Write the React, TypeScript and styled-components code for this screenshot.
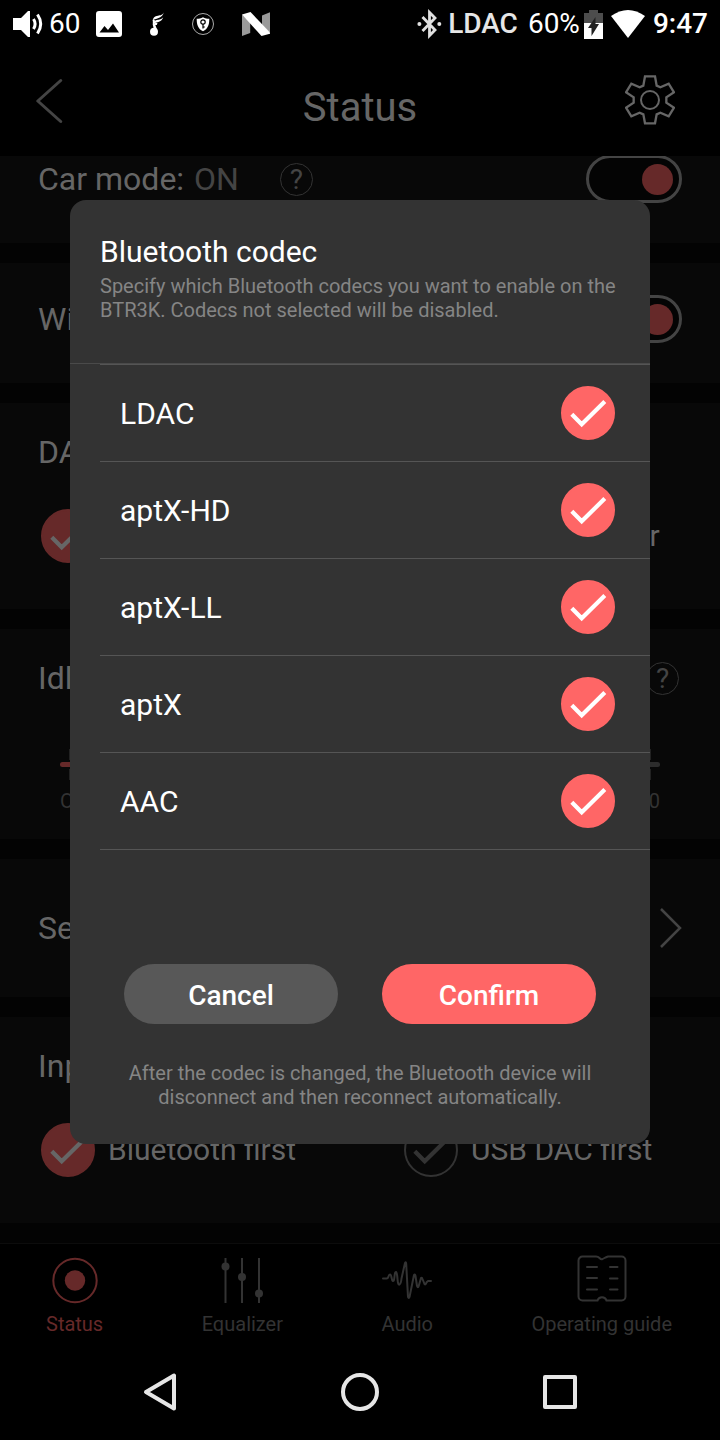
import React from "react";
import styled, { createGlobalStyle, css } from "styled-components";

const color = {
  accent: "#ff6666",
  accentDim: "#662929",
  panel: "#080808",
  gap: "#030303",
  text: "#666666",
  muted: "#444444",
  faint: "#333333",
  dialog: "#333333",
  line: "#555555",
  note: "#858585",
};

const GlobalStyle = createGlobalStyle`
  *, *::before, *::after { box-sizing: border-box; }
  body { margin: 0; background: #000; font-family: Roboto, "Liberation Sans", sans-serif; }
  h1, h2, h3, p, ul { margin: 0; padding: 0; font-weight: 400; }
  ul { list-style: none; }
  button { padding: 0; border: 0; background: none; color: inherit; font: inherit; cursor: pointer; }
  svg { display: block; flex: none; }
`;

const Screen = styled.div`
  position: relative;
  display: flex;
  flex-direction: column;
  height: 100vh;
  overflow: hidden;
  background: #000;
`;

/* ---------- system status bar ---------- */

const StatusBar = styled.div`
  position: relative;
  z-index: 2;
  display: flex;
  flex: none;
  justify-content: space-between;
  height: 50px;
  padding: 0 12px 2px 13px;
  color: #fff;
  font-size: 28px;
  line-height: 50px;
`;

const StatusGroup = styled.div<{ $gap: number }>`
  display: flex;
  align-items: center;
  gap: ${(p) => p.$gap}px;
`;

const StatusIcons = styled.div`
  display: flex;
  align-items: center;
  gap: 28px;
  margin-left: 10px;
`;

const StatusText = styled.span<{ $medium?: boolean }>`
  font-weight: ${(p) => (p.$medium ? 500 : 400)};
`;

const CodecText = styled.span`
  margin-right: 2px;
  color: #e6e6e6;
  font-weight: 500;
`;

/* ---------- app header ---------- */

const Header = styled.header`
  display: grid;
  flex: none;
  grid-template-columns: 1fr auto 1fr;
  align-items: start;
  height: 106px;
  padding: 0 36px;
  color: ${color.text};
`;

const Title = styled.h1`
  font-size: 40px;
  line-height: 116px;
`;

const HeaderButton = styled.button<{ $end?: boolean }>`
  display: flex;
  align-items: center;
  justify-self: ${(p) => (p.$end ? "end" : "start")};
  height: 100px;
  padding-right: ${(p) => (p.$end ? 9 : 0)}px;
`;

/* ---------- settings list ---------- */

const Main = styled.main`
  display: flex;
  flex: 1;
  flex-direction: column;
  justify-content: flex-end;
  min-height: 0;
  overflow: hidden;
  background: ${color.gap};
  color: ${color.text};
  font-size: 32px;
  line-height: 38px;
  white-space: nowrap;
`;

const Section = styled.section`
  flex: none;
  margin-bottom: 20px;
  background: ${color.panel};
`;

const SettingRow = styled.div<{ $size: "switch" | "link" }>`
  display: flex;
  align-items: center;
  justify-content: space-between;
  width: 100%;
  height: ${(p) => (p.$size === "switch" ? 120 : 138)}px;
  padding: 0 38px ${(p) => (p.$size === "switch" ? 8 : 0)}px;
`;

const RowLabel = styled.div`
  display: flex;
  align-items: center;
`;

const RowValue = styled.span`
  margin: 0 41px 0 10px;
  color: ${color.muted};
`;

const HelpButton = styled.button`
  width: 33px;
  height: 33px;
  border: 1px solid ${color.faint};
  border-radius: 50%;
  color: ${color.muted};
  font-size: 28px;
  line-height: 31px;
  text-align: center;
`;

const Switch = styled.input.attrs({ type: "checkbox", role: "switch" })`
  display: flex;
  align-items: center;
  justify-content: flex-end;
  width: 96px;
  height: 48px;
  margin: 0;
  padding: 0 6px;
  border: 3px solid ${color.muted};
  border-radius: 24px;
  background: #040404;
  appearance: none;

  &::before {
    width: 31px;
    height: 31px;
    border-radius: 50%;
    background: ${color.accentDim};
    content: "";
  }
`;

const LinkRow = styled(SettingRow).attrs({ as: "button" })`
  text-align: left;
`;

const Group = styled.fieldset`
  min-width: 0;
  height: 206px;
  margin: 0;
  padding: 30px 38px 0;
  border: 0;
`;

const GroupTitle = styled.legend`
  float: left;
  width: 100%;
  margin-bottom: 38px;
  padding: 0;
`;

const Options = styled.div`
  display: grid;
  clear: both;
  grid-template-columns: 1fr 1fr;
  gap: 88px;
  padding: 0 3px;
  font-size: 30px;
`;

const Option = styled.label`
  display: flex;
  align-items: center;
  gap: 13px;
`;

/* ---------- round tick control ---------- */

const tones = {
  bright: css`
    border-color: ${color.accent};
    background: ${color.accent};
  `,
  dim: css`
    border-color: ${color.accentDim};
    background: ${color.accentDim};
  `,
  off: css`
    border-color: ${color.faint};
    background: transparent;
  `,
};

const markColor = { bright: "#ffffff", dim: color.text, off: color.faint };

const TickBox = styled.span`
  display: grid;
  flex: none;
  width: 54px;
  height: 54px;

  > * {
    grid-area: 1 / 1;
  }
`;

const TickInput = styled.input<{ $tone: keyof typeof tones }>`
  width: 54px;
  height: 54px;
  margin: 0;
  border: 2px solid;
  border-radius: 50%;
  appearance: none;
  ${(p) => tones[p.$tone]}
`;

const TickMark = styled.svg`
  z-index: 1;
  pointer-events: none;
`;

function Tick({
  tone,
  ...input
}: { tone: keyof typeof tones } & React.InputHTMLAttributes<HTMLInputElement>) {
  return (
    <TickBox>
      <TickInput $tone={tone} {...input} />
      <TickMark width="54" height="54" viewBox="0 0 54 54" fill="none" aria-hidden="true">
        <path d="M10.8 28.3 20.7 38.3 43.8 15.5" stroke={markColor[tone]} strokeWidth="4.2" />
      </TickMark>
    </TickBox>
  );
}

/* ---------- idle timer slider ---------- */

const TimerSection = styled(Section)`
  height: 210px;
  padding-top: 30px;
`;

const TimerHead = styled.div`
  display: flex;
  align-items: center;
  justify-content: space-between;
  margin-bottom: 52px;
  padding: 0 41px 0 38px;
`;

const Timer = styled.div`
  margin: 0 60px;
`;

const Marks = styled.div`
  display: flex;
  justify-content: space-between;
  height: 11px;
  padding: 0 9px;

  span {
    width: 2px;
    background: #222;
  }
`;

const Range = styled.input.attrs({ type: "range" })`
  display: block;
  width: 100%;
  height: 9px;
  margin: 0;
  background: none;
  appearance: none;

  &::-webkit-slider-runnable-track {
    height: 5px;
    border-radius: 3px;
    background: linear-gradient(90deg, ${color.accentDim} 50%, #2c2c2c 50%);
  }

  &::-webkit-slider-thumb {
    width: 24px;
    height: 5px;
    background: ${color.accentDim};
    appearance: none;
  }
`;

const RangeLabels = styled.div`
  display: flex;
  justify-content: space-between;
  margin-top: 9px;
  color: ${color.faint};
  font-size: 20px;
  line-height: 24px;
`;

/* ---------- bottom tabs and system navigation ---------- */

const Tabs = styled.nav`
  display: flex;
  flex: none;
  justify-content: space-between;
  height: 101px;
  padding: 0 48px 0 46px;
  border-top: 1px solid #0c0c0c;
`;

const Tab = styled.a<{ $active?: boolean }>`
  display: flex;
  flex-direction: column;
  align-items: center;
  gap: 7px;
  padding-top: 11px;
  color: ${(p) => (p.$active ? color.accentDim : color.faint)};
  font-size: 20px;
  line-height: 24px;
  text-decoration: none;
`;

const SystemNav = styled.div`
  display: grid;
  flex: none;
  grid-template-columns: 1fr 1fr 1fr;
  height: 96px;
  padding: 0 60px;
`;

const SystemButton = styled.button`
  display: flex;
  align-items: center;
  justify-content: center;
`;

/* ---------- codec dialog ---------- */

const Overlay = styled.div`
  position: absolute;
  z-index: 2;
  inset: 0 0 96px;
  display: flex;
  align-items: center;
  padding: 0 70px;
`;

const Dialog = styled.form`
  flex: 1;
  overflow: hidden;
  border-radius: 16px;
  background: ${color.dialog};
  color: #fff;
`;

const DialogHead = styled.div`
  padding: 32px 30px 41px;
  border-bottom: 1px solid #4a4a4a;
`;

const DialogTitle = styled.h2`
  margin-bottom: 2px;
  font-size: 30px;
  line-height: 40px;
`;

const Note = styled.p<{ $center?: boolean }>`
  padding: ${(p) => (p.$center ? "37px 50px 35px" : "0")};
  color: ${color.note};
  font-size: 20px;
  line-height: 24px;
  text-align: ${(p) => (p.$center ? "center" : "left")};
`;

const CodecList = styled.ul`
  margin-left: 30px;
  border-top: 1px solid ${color.line};
`;

const CodecRow = styled.label`
  display: flex;
  align-items: center;
  justify-content: space-between;
  height: 97px;
  padding: 0 35px 0 20px;
  border-bottom: 1px solid ${color.line};
  font-size: 30px;
`;

const Actions = styled.div`
  display: grid;
  grid-template-columns: 1fr 1fr;
  gap: 44px;
  padding: 114px 54px 0;
`;

const ActionButton = styled.button<{ $primary?: boolean }>`
  height: 60px;
  padding-top: 2px;
  border-radius: 30px;
  background: ${(p) => (p.$primary ? color.accent : "#585858")};
  color: #fff;
  font-size: 28px;
  font-weight: 500;
`;

/* ---------- icons ---------- */

const VolumeIcon = () => (
  <svg width="30" height="26" viewBox="0 0 30 26" aria-hidden="true">
    <path d="M0 7h8l7-7h2v26h-2l-7-7H0z" fill="#fff" />
    <path d="M20.500 8q3.200 5 0 10M24.500 3.500q6.400 9.500 0 19" fill="none" stroke="#fff" strokeWidth="3" />
  </svg>
);

const PictureIcon = () => (
  <svg width="26" height="26" viewBox="0 0 26 26" aria-hidden="true">
    <path
      fill="#fff"
      fillRule="evenodd"
      d="M3 0h20a3 3 0 0 1 3 3v20a3 3 0 0 1-3 3H3a3 3 0 0 1-3-3V3a3 3 0 0 1 3-3zM3.500 21.500h19.500l-6-9-5 6.500-3.500-4z"
    />
  </svg>
);

const MusicIcon = () => (
  <svg width="14" height="24" viewBox="0 0 14 24" fill="#fff" aria-hidden="true">
    <path d="M13.800 0C13 3 10.500 3.300 8 3.700 4.500 4.200 3.200 5.500 2.600 8.800 5 5.800 12.500 7.500 13.800 0z" />
    <path d="M13.500 4.500c-1 2.700-3.500 2.900-5.500 3.300C4.700 8.400 3.300 9.700 2.800 12.500 5 10 12 11 13.500 4.500z" />
    <path d="M2.800 8v5l1.200 4.500h3L4.800 11.500V8z" />
    <path d="M5 11h2.500L6.800 13H5z" />
    <circle cx="4" cy="19.700" r="4" />
  </svg>
);

const ShieldIcon = () => (
  <svg width="22" height="22" viewBox="0 0 22 22" aria-hidden="true">
    <circle cx="11" cy="11" r="10.500" fill="none" stroke="#aaa" />
    <path d="M11 4.200c2 1.100 4 1.500 6.300 1.500 0 6-1.300 10-6.300 12.600-5-2.600-6.300-6.600-6.300-12.600 2.300 0 4.300-.4 6.300-1.500z" fill="#fff" />
    <circle cx="11" cy="9" r="2.200" fill="none" stroke="#000" strokeWidth="1.200" />
    <path d="M11 11v4.500M11 14h1.800" stroke="#000" strokeWidth="1.200" />
  </svg>
);

const NougatIcon = () => (
  <svg width="28" height="24" viewBox="0 0 28 24" aria-hidden="true">
    <path d="M0 2.500 8.200 10v11L0 24zM28 .300V21l-8-8V3.500z" fill="#9a9a9a" />
    <path d="M0 2.500 8.500 0 28 20.500v1.300L19.500 24z" fill="#fff" />
  </svg>
);

const BluetoothIcon = () => (
  <svg width="25" height="30" viewBox="0 0 25 30" fill="none" stroke="#e0e0e0" strokeWidth="2.800" aria-hidden="true">
    <path d="M5.500 8 18 21l-5.500 5.500v-23L18 9 5.500 22" />
    <circle cx="2.400" cy="15" r="2" fill="#e0e0e0" stroke="none" />
    <circle cx="22.300" cy="15" r="2" fill="#e0e0e0" stroke="none" />
  </svg>
);

const BatteryIcon = () => (
  <svg width="19" height="29" viewBox="0 0 19 29" aria-hidden="true">
    <path d="M5 0h9v3h5v10H0V3h5z" fill="#4d4d4d" />
    <path d="M0 13h19v16H0z" fill="#fff" />
    <path d="M11.500 7v7H15L7.500 26v-8H4z" fill="#222" />
  </svg>
);

const WifiIcon = () => (
  <svg width="34" height="28" viewBox="0 0 34 28" aria-hidden="true">
    <path d="M0 6Q17-6 34 6L17 28z" fill="#fff" />
  </svg>
);

const BackIcon = () => (
  <svg width="28" height="48" viewBox="0 0 28 48" fill="none" aria-hidden="true">
    <path d="M24.700 4.500 1.800 25 24.700 45.500" stroke={color.muted} strokeWidth="3" strokeLinecap="round" strokeLinejoin="round" />
  </svg>
);

const GearIcon = () => (
  <svg width="50" height="50" viewBox="-75 -75 150 150" fill="none" stroke={color.text} strokeWidth="7" aria-hidden="true">
    <path d="M-20-43-15-71h30l5 28 11 5 25-11 16 26-23 15v16l23 15-16 26-25-11-11 5-5 27h-30l-5-27-11-5-25 11-16-26 23-15V-8l-23-15 16-26 25 11z" />
    <circle r="27" strokeWidth="6" />
  </svg>
);

const ChevronIcon = () => (
  <svg width="22" height="40" viewBox="0 0 22 40" fill="none" aria-hidden="true">
    <path d="M1 1 20 20 1 39" stroke={color.muted} strokeWidth="2.500" />
  </svg>
);

const StatusIcon = () => (
  <svg width="50" height="50" viewBox="0 0 50 50" fill="none" aria-hidden="true">
    <circle cx="25" cy="25.500" r="21.700" stroke="currentColor" strokeWidth="2" />
    <circle cx="25" cy="25.500" r="10.200" fill="currentColor" />
  </svg>
);

const EqualizerIcon = () => (
  <svg width="50" height="50" viewBox="0 0 50 50" fill="currentColor" aria-hidden="true">
    <path d="M7.500 3h2v45h-2zM24 3h2v45h-2zM41 3h2v45h-2z" />
    <circle cx="8.500" cy="11.500" r="4" />
    <circle cx="25" cy="22" r="4" />
    <circle cx="42" cy="38.500" r="4" />
  </svg>
);

const AudioIcon = () => (
  <svg width="50" height="50" viewBox="0 0 50 50" fill="none" stroke="currentColor" strokeWidth="2" strokeLinejoin="round" strokeLinecap="round" aria-hidden="true">
    <path d="M1 23.500h3.500q1.500 0 2-2t1.500-2 1.500 3 1.500 3.500 1.500-4.500T14 17t1.500 7 2 5.500 2-6L23 8q.8-2 1.200 1L26 42q.8 2 1.500 0l4.500-22q1-1.500 1.500 1l1.500 10q1 2.500 1.700 0l2.300-8q1-1 1.500 1l2 5q1 1 1.500-.5t2-2.500H49" />
  </svg>
);

const GuideIcon = () => (
  <svg width="50" height="50" viewBox="0 0 50 50" fill="none" stroke="currentColor" strokeWidth="2" strokeLinecap="round" aria-hidden="true">
    <path d="M5.500 1.500H19q2 0 3.500 1.500t2.500 1.200T27.500 3 31 1.500h13.500a4 4 0 0 1 4 4v36a4 4 0 0 1-4 4h-15q-1-3.300-4.500-3.300t-4.500 3.300h-15a4 4 0 0 1-4-4v-36a4 4 0 0 1 4-4z" />
    <path d="M10 12h10M10 23h10M10 34.500h10M33 12h7.500M33 23.500h7.500M33 34.500h7.500" />
  </svg>
);

const navStroke = { fill: "none", stroke: "#e6e6e6", strokeWidth: 4, strokeLinejoin: "round" as const };

const codecs = ["LDAC", "aptX-HD", "aptX-LL", "aptX", "AAC"];

const tabs = [
  { label: "Status", icon: <StatusIcon />, active: true },
  { label: "Equalizer", icon: <EqualizerIcon /> },
  { label: "Audio", icon: <AudioIcon /> },
  { label: "Operating guide", icon: <GuideIcon /> },
];

export default function App() {
  return (
    <>
      <GlobalStyle />
      <Screen>
        <StatusBar>
          <StatusGroup $gap={6}>
            <VolumeIcon />
            <StatusText>60</StatusText>
            <StatusIcons>
              <PictureIcon />
              <MusicIcon />
              <ShieldIcon />
              <NougatIcon />
            </StatusIcons>
          </StatusGroup>
          <StatusGroup $gap={8}>
            <StatusGroup $gap={6}>
              <BluetoothIcon />
              <CodecText>LDAC</CodecText>
            </StatusGroup>
            <StatusGroup $gap={4}>
              <StatusText>60%</StatusText>
              <BatteryIcon />
            </StatusGroup>
            <WifiIcon />
            <StatusText $medium>9:47</StatusText>
          </StatusGroup>
        </StatusBar>

        <Header>
          <HeaderButton type="button" aria-label="Back">
            <BackIcon />
          </HeaderButton>
          <Title>Status</Title>
          <HeaderButton type="button" aria-label="Settings" $end>
            <GearIcon />
          </HeaderButton>
        </Header>

        <Main>
          <Section>
            <SettingRow $size="switch">
              <RowLabel>
                <label htmlFor="car-mode">Car mode:</label>
                <RowValue>ON</RowValue>
                <HelpButton type="button" aria-label="About car mode">?</HelpButton>
              </RowLabel>
              <Switch id="car-mode" defaultChecked />
            </SettingRow>
          </Section>
          <Section>
            <SettingRow $size="switch">
              <label htmlFor="wire">Wire</label>
              <Switch id="wire" defaultChecked />
            </SettingRow>
          </Section>
          <Section>
            <Group>
              <GroupTitle>DAC</GroupTitle>
              <Options>
                <Option>
                  <Tick tone="dim" type="radio" name="dac" defaultChecked />
                  High
                </Option>
                <Option>
                  <Tick tone="off" type="radio" name="dac" />
                  Normal power
                </Option>
              </Options>
            </Group>
          </Section>
          <TimerSection>
            <TimerHead>
              <label htmlFor="idle-timer">Idle</label>
              <HelpButton type="button" aria-label="About the idle timer">?</HelpButton>
            </TimerHead>
            <Timer>
              <Marks><span /><span /><span /><span /></Marks>
              <Range id="idle-timer" />
              <Marks><span /><span /><span /><span /></Marks>
              <RangeLabels>
                <span>OFF</span>
                <span>30</span>
              </RangeLabels>
            </Timer>
          </TimerSection>
          <Section>
            <LinkRow $size="link">
              <span>Select</span>
              <ChevronIcon />
            </LinkRow>
          </Section>
          <Section>
            <Group>
              <GroupTitle>Input</GroupTitle>
              <Options>
                <Option>
                  <Tick tone="dim" type="radio" name="input" defaultChecked />
                  Bluetooth first
                </Option>
                <Option>
                  <Tick tone="off" type="radio" name="input" />
                  USB DAC first
                </Option>
              </Options>
            </Group>
          </Section>
        </Main>

        <Tabs>
          {tabs.map((tab) => (
            <Tab key={tab.label} href="#" $active={tab.active}>
              {tab.icon}
              {tab.label}
            </Tab>
          ))}
        </Tabs>

        <SystemNav>
          <SystemButton type="button" aria-label="Back">
            <svg width="38" height="40" viewBox="0 0 38 40">
              <path d="M33 3.500v33L5 20z" {...navStroke} />
            </svg>
          </SystemButton>
          <SystemButton type="button" aria-label="Home">
            <svg width="40" height="40" viewBox="0 0 40 40">
              <circle cx="20" cy="20" r="17" {...navStroke} />
            </svg>
          </SystemButton>
          <SystemButton type="button" aria-label="Recent apps">
            <svg width="40" height="40" viewBox="0 0 40 40">
              <rect x="5" y="5" width="30" height="30" {...navStroke} />
            </svg>
          </SystemButton>
        </SystemNav>

        <Overlay>
          <Dialog role="dialog" aria-labelledby="codec-title" onSubmit={(e) => e.preventDefault()}>
            <DialogHead>
              <DialogTitle id="codec-title">Bluetooth codec</DialogTitle>
              <Note>
                Specify which Bluetooth codecs you want to enable on the BTR3K. Codecs not selected will be disabled.
              </Note>
            </DialogHead>
            <CodecList>
              {codecs.map((codec) => (
                <li key={codec}>
                  <CodecRow>
                    {codec}
                    <Tick tone="bright" type="checkbox" defaultChecked />
                  </CodecRow>
                </li>
              ))}
            </CodecList>
            <Actions>
              <ActionButton type="button">Cancel</ActionButton>
              <ActionButton type="submit" $primary>Confirm</ActionButton>
            </Actions>
            <Note $center>
              After the codec is changed, the Bluetooth device will disconnect and then reconnect automatically.
            </Note>
          </Dialog>
        </Overlay>
      </Screen>
    </>
  );
}
